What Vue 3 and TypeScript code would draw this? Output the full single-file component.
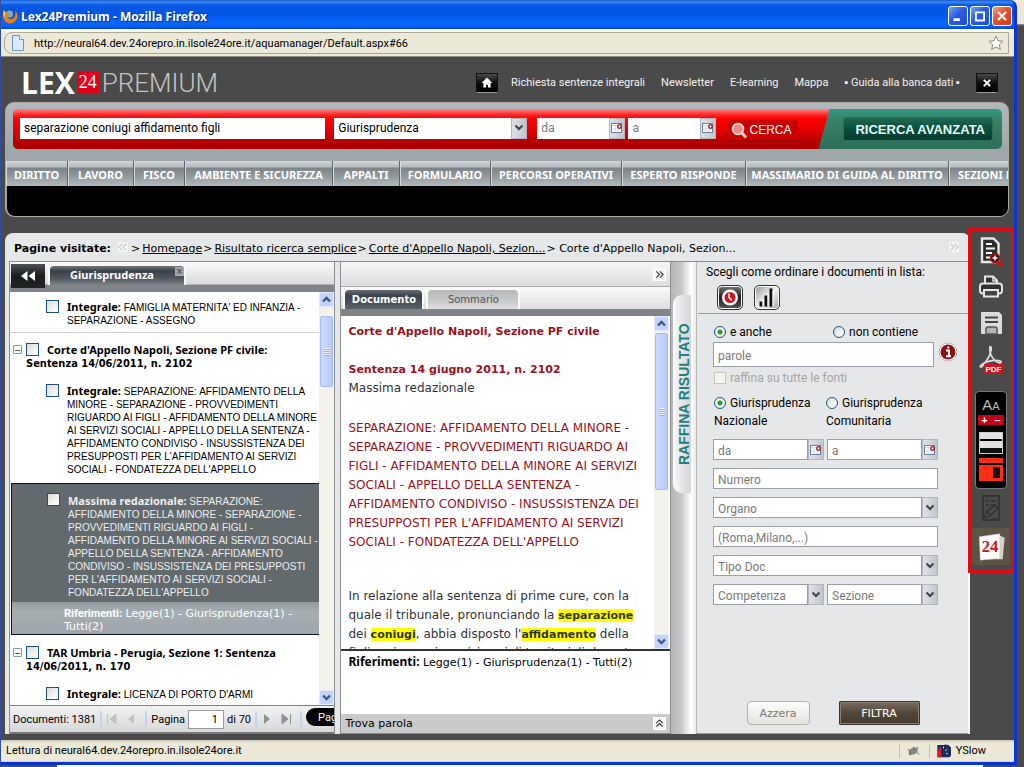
<script setup lang="ts">
import { ref } from 'vue'

interface Entry {
  kind: 'entry' | 'group' | 'selected'
  label: string
  text: string
  refs?: string
}

const query = ref('separazione coniugi affidamento figli')
const page = ref('1')
const mode = ref('anche')
const scope = ref('naz')

const topLinks: string[] = ['Richiesta sentenze integrali', 'Newsletter', 'E-learning', 'Mappa', '▪ Guida alla banca dati ▪']
const areas: string[] = [
  'DIRITTO', 'LAVORO', 'FISCO', 'AMBIENTE E SICUREZZA', 'APPALTI', 'FORMULARIO',
  'PERCORSI OPERATIVI', 'ESPERTO RISPONDE', 'MASSIMARIO DI GUIDA AL DIRITTO', 'SEZIONI LAVORO',
]
const crumbs: string[] = ['Homepage', 'Risultato ricerca semplice', "Corte d'Appello Napoli, Sezion..."]

const entries: Entry[] = [
  { kind: 'entry', label: 'Integrale:', text: "FAMIGLIA MATERNITA' ED INFANZIA -\nSEPARAZIONE - ASSEGNO" },
  { kind: 'group', label: "Corte d'Appello Napoli, Sezione PF civile:", text: 'Sentenza 14/06/2011, n. 2102' },
  {
    kind: 'entry',
    label: 'Integrale:',
    text: "SEPARAZIONE: AFFIDAMENTO DELLA\nMINORE - SEPARAZIONE - PROVVEDIMENTI\nRIGUARDO AI FIGLI - AFFIDAMENTO DELLA MINORE\nAI SERVIZI SOCIALI - APPELLO DELLA SENTENZA -\nAFFIDAMENTO CONDIVISO - INSUSSISTENZA DEI\nPRESUPPOSTI PER L'AFFIDAMENTO AI SERVIZI\nSOCIALI - FONDATEZZA DELL'APPELLO",
  },
  {
    kind: 'selected',
    label: 'Massima redazionale:',
    text: "SEPARAZIONE:\nAFFIDAMENTO DELLA MINORE - SEPARAZIONE -\nPROVVEDIMENTI RIGUARDO AI FIGLI -\nAFFIDAMENTO DELLA MINORE AI SERVIZI SOCIALI -\nAPPELLO DELLA SENTENZA - AFFIDAMENTO\nCONDIVISO - INSUSSISTENZA DEI PRESUPPOSTI\nPER L'AFFIDAMENTO AI SERVIZI SOCIALI -\nFONDATEZZA DELL'APPELLO",
    refs: 'Legge(1) - Giurisprudenza(1) -\nTutti(2)',
  },
  { kind: 'group', label: 'TAR Umbria - Perugia, Sezione 1: Sentenza', text: '14/06/2011, n. 170' },
  { kind: 'entry', label: 'Integrale:', text: "LICENZA DI PORTO D'ARMI" },
]
</script>

<template>
  <div class="desktop">
    <svg class="defs" aria-hidden="true">
      <symbol id="chev" viewBox="0 0 10 8"><path d="M1.5 1.5 5 5l3.500-3.500" fill="none" stroke="#3f4347" stroke-width="2" /></symbol>
      <symbol id="cal" viewBox="0 0 14 14">
        <rect x="1.500" y="2.500" width="10" height="9" fill="#fff" stroke="#6b7f9e" />
        <path d="M2 4.500h9M5 5v6M8 5v6M2 8h9" stroke="#d3dbe8" />
        <circle cx="9.500" cy="5.500" r="1.800" fill="#fff" stroke="#8c1420" stroke-width="1.300" />
      </symbol>
      <symbol id="up" viewBox="0 0 15 15"><path d="M4 9.500 7.500 6 11 9.500" fill="none" stroke="#3c5688" stroke-width="2.400" /></symbol>
      <symbol id="down" viewBox="0 0 15 15"><path d="M4 5.500 7.500 9 11 5.500" fill="none" stroke="#3c5688" stroke-width="2.400" /></symbol>
      <symbol id="more" viewBox="0 0 10 10"><path d="M1.500 1.500 5 5 1.500 8.500M5.500 1.500 9 5 5.500 8.500" fill="none" stroke="currentColor" stroke-width="1.200" /></symbol>
    </svg>

    <div class="window">
      <header class="titlebar">
        <svg class="fox" viewBox="0 0 16 16">
          <circle cx="8" cy="8" r="7" fill="#274f9c" />
          <circle cx="7.500" cy="6" r="3.500" fill="#6fb1e6" />
          <path d="M2 2C0 6 .5 12 4.500 14.500 9 17 15 14 15.500 8.500 15.600 6 14.500 3.500 13 2.500c.8 2 .6 3.500.2 4.500-.5 3-3 4.500-5.200 4C6 10.600 5 9.500 5.200 8c.8.300 2 .200 2.600-.8C6.500 7 6.200 6 6.400 5 5 4.800 3.500 4.500 3 3.800z" fill="#ee7d18" />
          <path d="M2 2C.8 5 1 8 2.500 10 2.600 7.500 3 6 4.500 5 3.500 4.600 3 4 3 3.500z" fill="#ffc13a" />
        </svg>
        <h1>Lex24Premium - Mozilla Firefox</h1>
        <div class="winbtns">
          <button aria-label="Riduci"><svg viewBox="0 0 20 20"><path d="M5 14h7" stroke="#fff" stroke-width="3" /></svg></button>
          <button aria-label="Ingrandisci"><svg viewBox="0 0 20 20"><path d="M5 6h10M5.500 5v10h9V5" fill="none" stroke="#fff" stroke-width="2" /></svg></button>
          <button class="quit" aria-label="Chiudi finestra"><svg viewBox="0 0 20 20"><path d="m5.500 5.500 9 9m0-9-9 9" stroke="#fff" stroke-width="2.400" /></svg></button>
        </div>
      </header>

      <div class="addressbar">
        <div class="address">
          <svg class="pageicon" viewBox="0 0 14 16"><path d="M1.500.500h7l4 4v11h-11z" fill="#dcebfb" stroke="#6f93c9" /><path d="M8.500.500v4h4" fill="#fff" stroke="#6f93c9" /></svg>
          <span class="url">http://neural64.dev.24orepro.in.ilsole24ore.it/aquamanager/Default.aspx#66</span>
          <svg class="star" viewBox="0 0 16 16"><path d="m8 1.200 2 4.500 4.900.500-3.600 3.300 1 4.900L8 11.900l-4.300 2.500 1-4.900L1.100 6.200 6 5.700z" fill="#fff" stroke="#8a8a86" /></svg>
        </div>
      </div>

      <main class="site">
        <div class="brandrow">
          <div class="logo"><b>LEX</b><span class="n24">24</span><span class="prem">PREMIUM</span></div>
          <nav class="toplinks">
            <a href="#" class="sq" aria-label="Home"><svg viewBox="0 0 22 20"><path d="M11 4 5 10h2v5h3v-3h2v3h3v-5h2z" fill="#fff" /></svg></a>
            <a v-for="l in topLinks" :key="l" href="#">{{ l }}</a>
            <a href="#" class="sq last" aria-label="Chiudi"><svg viewBox="0 0 22 20"><path d="m7.500 6.500 7 7m0-7-7 7" stroke="#fff" stroke-width="2.200" /></svg></a>
          </nav>
        </div>

        <section class="console">
          <form class="searchbar" @submit.prevent>
            <div class="redpart">
              <input v-model="query" class="q" aria-label="Testo da cercare" />
              <div class="combo src">
                <select aria-label="Fonte"><option>Giurisprudenza</option></select>
                <span class="drop"><svg><use href="#chev" /></svg></span>
              </div>
              <div class="combo when"><input placeholder="da" aria-label="Dal" /><button type="button" class="drop" aria-label="Calendario dal"><svg class="cal"><use href="#cal" /></svg></button></div>
              <div class="combo when second"><input placeholder="a" aria-label="Al" /><button type="button" class="drop" aria-label="Calendario al"><svg class="cal"><use href="#cal" /></svg></button></div>
              <button class="cerca">
                <svg viewBox="0 0 17 17"><path d="m10.500 10.500 4.500 5" stroke="#f3d0cc" stroke-width="3" /><circle cx="7" cy="7" r="5.500" fill="#ef8a86" stroke="#f8dcd8" stroke-width="1.600" /></svg>
                CERCA
              </button>
            </div>
            <button type="button" class="advanced">RICERCA AVANZATA</button>
          </form>
          <nav class="areas"><a v-for="a in areas" :key="a" href="#">{{ a }}</a></nav>
          <div class="blackband"></div>
        </section>

        <div class="work">
          <section class="panel">
            <div class="crumbs">
              <strong>Pagine visitate:</strong>
              <span class="ghost"><svg class="flip"><use href="#more" /></svg></span>
              <template v-for="c in crumbs" :key="c">&gt; <a href="#">{{ c }}</a></template>
              <span>&gt; Corte d'Appello Napoli, Sezion...</span>
              <span class="ghost end"><svg><use href="#more" /></svg></span>
            </div>

            <div class="columns">
              <section class="results">
                <div class="rhead">
                  <button class="back" aria-label="Indietro"><svg viewBox="0 0 16 12"><path d="M7.500 1v10L1 6zM15 1v10L8.500 6z" fill="#fff" /></svg></button>
                  <div class="rtab">Giurisprudenza<button aria-label="Chiudi scheda">×</button></div>
                </div>
                <div class="listwrap">
                  <div class="list">
                    <article v-for="(e, i) in entries" :key="i" :class="e.kind">
                      <button v-if="e.kind === 'group'" class="tree" aria-label="Comprimi">–</button>
                      <label>
                        <input type="checkbox" />
                        <span class="body"><b>{{ e.label }}</b>{{ e.kind === 'group' ? '\n' : ' ' }}<span>{{ e.text }}</span></span>
                      </label>
                      <p v-if="e.refs" class="refs"><b>Riferimenti:</b> {{ e.refs }}</p>
                    </article>
                  </div>
                  <div class="scroll short" aria-hidden="true">
                    <svg class="arr"><use href="#up" /></svg>
                    <span class="thumb"></span>
                    <svg class="arr"><use href="#down" /></svg>
                  </div>
                </div>
                <div class="pager">
                  <span class="count">Documenti: 1381</span>
                  <i></i>
                  <button disabled aria-label="Prima"><svg viewBox="0 0 12 12"><path d="M1.500 1v10M10 1v10L4 6z" stroke="currentColor" fill="currentColor" /></svg></button>
                  <button disabled aria-label="Precedente"><svg viewBox="0 0 12 12"><path d="M9 1v10L3 6z" fill="currentColor" /></svg></button>
                  <i></i>
                  <label>Pagina <input v-model="page" /></label>
                  <span>di 70</span>
                  <i></i>
                  <button aria-label="Successiva"><svg viewBox="0 0 12 12"><path d="M3 1v10l6-5z" fill="currentColor" /></svg></button>
                  <button aria-label="Ultima"><svg viewBox="0 0 12 12"><path d="M10.500 1v10M2 1v10l6-5z" stroke="currentColor" fill="currentColor" /></svg></button>
                  <i></i>
                  <button class="pill">Pagina</button>
                </div>
              </section>

              <section class="doc">
                <div class="dhead"><button class="mini" aria-label="Espandi"><svg><use href="#more" /></svg></button></div>
                <div class="dtabs"><button class="on">Documento</button><button>Sommario</button></div>
                <div class="docwrap">
                  <article class="text">
                    <h2>Corte d'Appello Napoli, Sezione PF civile</h2>
                    <h2>Sentenza 14 giugno 2011, n. 2102</h2>
                    <p>Massima redazionale</p>
                    <p class="abstract">SEPARAZIONE: AFFIDAMENTO DELLA MINORE -<br />SEPARAZIONE - PROVVEDIMENTI RIGUARDO AI<br />FIGLI - AFFIDAMENTO DELLA MINORE AI SERVIZI<br />SOCIALI - APPELLO DELLA SENTENZA -<br />AFFIDAMENTO CONDIVISO - INSUSSISTENZA DEI<br />PRESUPPOSTI PER L'AFFIDAMENTO AI SERVIZI<br />SOCIALI - FONDATEZZA DELL'APPELLO</p>
                    <p class="para">In relazione alla sentenza di prime cure, con la<br />quale il tribunale, pronunciando la <mark>separazione</mark><br />dei <mark>coniugi</mark>, abbia disposto l'<mark>affidamento</mark> della<br />figlia minore ai servizi sociali territoriali durante</p>
                  </article>
                  <div class="scroll long" aria-hidden="true">
                    <svg class="arr"><use href="#up" /></svg>
                    <span class="thumb"></span>
                    <svg class="arr"><use href="#down" /></svg>
                  </div>
                </div>
                <p class="drefs"><b>Riferimenti:</b> Legge(1) - Giurisprudenza(1) - Tutti(2)</p>
                <div class="find">Trova parola<button class="mini" aria-label="Apri ricerca"><svg class="turn"><use href="#more" /></svg></button></div>
              </section>

              <div class="sash"><button>RAFFINA RISULTATO</button></div>

              <form class="filter" @submit.prevent>
                <div class="sort">
                  <p>Scegli come ordinare i documenti in lista:</p>
                  <button type="button" class="clock" aria-label="Per data"><svg viewBox="0 0 24 22"><circle cx="12" cy="11" r="8" fill="#fff" /><circle cx="12" cy="11" r="5.500" fill="#cf1420" /><path d="M11 7v4l3 3" fill="none" stroke="#fff" stroke-width="1.500" /></svg></button>
                  <button type="button" aria-label="Per rilevanza"><svg viewBox="0 0 24 22"><path d="M6 20v-5M11 20V9M16 20V2" stroke="#111" stroke-width="3" /><path d="M8 20v-5M13 20V9M18 20V4" stroke="#fff" /></svg></button>
                </div>
                <div class="pair modes">
                  <label><input v-model="mode" type="radio" name="mode" value="anche" />e anche</label>
                  <label><input v-model="mode" type="radio" name="mode" value="non" />non contiene</label>
                </div>
                <div class="words">
                  <input placeholder="parole" aria-label="Parole" />
                  <svg viewBox="0 0 20 20"><circle cx="10" cy="10" r="9" fill="#fff" stroke="#b9b4b4" /><circle cx="10" cy="10" r="7.500" fill="#8d0f16" /><path d="M8 8.500h3V14M8 14.300h5M9.300 5.500h2" fill="none" stroke="#fff" stroke-width="2" /></svg>
                </div>
                <label class="all"><input type="checkbox" disabled />raffina su tutte le fonti</label>
                <div class="pair scopes">
                  <label><input v-model="scope" type="radio" name="scope" value="naz" />Giurisprudenza<br />Nazionale</label>
                  <label><input v-model="scope" type="radio" name="scope" value="com" />Giurisprudenza<br />Comunitaria</label>
                </div>
                <div class="fields">
                  <div class="duo">
                    <div class="combo"><input placeholder="da" aria-label="Data dal" /><button type="button" class="drop" aria-label="Calendario"><svg class="cal"><use href="#cal" /></svg></button></div>
                    <div class="combo"><input placeholder="a" aria-label="Data al" /><button type="button" class="drop" aria-label="Calendario"><svg class="cal"><use href="#cal" /></svg></button></div>
                  </div>
                  <input placeholder="Numero" aria-label="Numero" />
                  <div class="combo"><select aria-label="Organo"><option>Organo</option></select><span class="drop"><svg><use href="#chev" /></svg></span></div>
                  <input placeholder="(Roma,Milano,...)" aria-label="Sede" />
                  <div class="combo"><select aria-label="Tipo documento"><option>Tipo Doc</option></select><span class="drop"><svg><use href="#chev" /></svg></span></div>
                  <div class="duo">
                    <div class="combo"><select aria-label="Competenza"><option>Competenza</option></select><span class="drop"><svg><use href="#chev" /></svg></span></div>
                    <div class="combo"><select aria-label="Sezione"><option>Sezione</option></select><span class="drop"><svg><use href="#chev" /></svg></span></div>
                  </div>
                </div>
                <div class="actions"><button type="reset">Azzera</button><button class="go">FILTRA</button></div>
              </form>
            </div>
          </section>

          <aside class="tools">
            <button aria-label="Cerca nel documento"><svg viewBox="0 0 28 32"><path d="M5 2.500h11.500l5 5V26H5z" fill="#2c2c2c" stroke="#e8e8e8" stroke-width="2.400" /><path d="M9 8h6M9 12.500h9M9 17h6M9 21.500h5" stroke="#fff" stroke-width="2.200" /><path d="m19 24 6 6" stroke="#c4161c" stroke-width="3.500" /><circle cx="18" cy="22" r="4.500" fill="#3a1012" stroke="#b01218" stroke-width="1.500" /><path d="M15.500 22h5M18 19.500v5" stroke="#fff" stroke-width="1.500" /></svg></button>
            <button aria-label="Stampa"><svg viewBox="0 0 28 32"><path d="M8 12V4.500h8l4 4V12" fill="#333" stroke="#e6e6e6" stroke-width="2" /><path d="M16 4.500V9h4" fill="none" stroke="#e6e6e6" stroke-width="1.500" /><rect x="3" y="11.500" width="22" height="10" rx="3" fill="#333" stroke="#e6e6e6" stroke-width="2" /><path d="M7 18h14v6.500H7z" fill="#444" stroke="#e6e6e6" stroke-width="2" /></svg></button>
            <button aria-label="Salva"><svg viewBox="0 0 28 32"><path d="M5 4h17l3 3v18q0 1-1 1H5q-1 0-1-1V5q0-1 1-1z" fill="#dcdcdc" /><path d="M8 9.500h13M8 14h13" stroke="#444" stroke-width="2" /><path d="M9 26v-5q0-2 2-2h7q2 0 2 2v5z" fill="#b5b5b5" stroke="#555" stroke-width="1.500" /></svg></button>
            <button aria-label="Esporta PDF"><svg viewBox="0 0 28 32"><path d="M13 2.500c3 0 1 10-8 20-3 2-2-2 3-4 6-2.500 13-3 16-1 1 2-3 2-6-1-4-4-6-9-5-14z" fill="none" stroke="#ddd" stroke-width="1.700" /><path d="M7 20h19v9H7z" fill="#c8141a" /><text x="16.500" y="28" text-anchor="middle">PDF</text></svg></button>
            <div class="fontbox">
              <span class="aa">A<small>A</small></span>
              <span class="pm"><button aria-label="Ingrandisci testo">+</button><button aria-label="Riduci testo">–</button></span>
              <span class="swatch light"></span>
              <span class="swatch red"></span>
            </div>
            <button class="pen" disabled aria-label="Note"><svg viewBox="0 0 28 32"><path d="M6 3h16v24H6z" fill="none" stroke="#2f2f2f" stroke-width="1.500" /><path d="M9 8h3M14 8h5M9 12h3M14 12h5M7 25l3-7 8-6 3 3-8 8zM10 18l3 4M15 26h5" fill="none" stroke="#2f2f2f" stroke-width="1.300" /></svg></button>
            <button class="cards" aria-label="24 Ore"><svg viewBox="0 0 38 38"><path d="m26 7 7 3-2 22H12z" fill="#d9d3c4" /><path d="m7 9 21-3v25l-20 2z" fill="#fff" stroke="#cfc8b8" stroke-width=".5" /><text x="18" y="25" text-anchor="middle">24</text></svg></button>
          </aside>
        </div>
      </main>

      <footer class="status">
        <span>Lettura di neural64.dev.24orepro.in.ilsole24ore.it</span>
        <span class="ext"><svg viewBox="0 0 18 14"><path d="M3 8q3-6 9-5l3-1-1 3q1 4-4 6l-5 1q-2-1-2-4z" fill="#8a8a84" /><path d="M2 5l4 2M9 2l1 4M13 9l3 2M4 12l2-3" stroke="#55554f" /></svg></span>
        <span class="ext"><svg viewBox="0 0 16 16"><path d="M1 1h7a8 8 0 0 1 7 14H1z" fill="#1d2a5c" /><path d="M4 4l1 2M8 3v2M12 6l-2 2M13 11h-2" stroke="#fff" /><path d="M1 7l4-3 1 11H1z" fill="#d3202a" /></svg>YSlow</span>
      </footer>
    </div>
  </div>
</template>

<style>
html, body { margin: 0; height: 100%; }
</style>

<style scoped>
* { box-sizing: border-box; }
.desktop {
  height: 100vh; min-height: 700px; padding: 0 7px 2px 0; overflow: hidden;
  background: linear-gradient(90deg, #4a4a4a 57px, #fff 57px, #fff 96%, #4a4a4a 96%) left bottom / 100% 2px no-repeat,
    linear-gradient(#ece9d8 24px, #999 24px, #4a4a4a 26px);
  font: 11px Roboto, "Liberation Sans", sans-serif; color: #000;
}
.defs { position: absolute; width: 0; height: 0; }
button, input, select { font: inherit; margin: 0; padding: 0; border: 0; border-radius: 0; color: inherit; background: none; min-width: 0; }
h1, h2, p { margin: 0; font-size: inherit; }
a { color: inherit; }
svg { display: block; flex: none; }

.window { height: 100%; display: flex; flex-direction: column; border: solid #0a34d4; border-width: 0 3px 3px 1px; border-left-color: #2f4f9c; border-radius: 0 7px 0 0; background: #4a4a4a; overflow: hidden; }
.titlebar { height: 29px; display: flex; align-items: center; padding: 3px 0 0 1px; background: linear-gradient(#1659c8, #3a8cf8 2px, #0758e4 5px, #0055e5 14px, #0a66fd 22px, #0562fa 26px, #0347c8); }
.fox { width: 16px; height: 16px; margin-right: 3px; }
.titlebar h1 { flex: 1; font: bold 12px "Noto Sans", sans-serif; color: #fff; text-shadow: 1px 1px 1px #0f2a80; }
.winbtns { display: flex; gap: 2px; padding-right: 2px; }
.winbtns button { width: 20px; height: 20px; border: 1px solid #fff; border-radius: 3px; background: linear-gradient(135deg, #7ba2f0, #2a5be0 45%, #1e50d8); }
.winbtns svg { width: 18px; height: 18px; }
.winbtns .quit { background: linear-gradient(135deg, #f0a08c, #e0512c 45%, #cc3c18); }

.addressbar { padding: 3px 5px 2px 3px; background: linear-gradient(#fff 2px, #ece9d8 4px); border-bottom: 1px solid #8f8d80; }
.address { height: 22px; display: flex; align-items: center; padding: 0 4px 0 6px; border: 1px solid #aba894; border-radius: 8px 0 0 8px; background: #ece9d8; }
.pageicon { width: 14px; height: 16px; margin-right: 9px; }
.url { flex: 1; }
.star { width: 16px; height: 16px; }

.site { flex: 1; min-height: 0; display: flex; flex-direction: column; padding: 0 0 6px 4px; }
.brandrow { height: 45px; display: flex; align-items: center; justify-content: space-between; padding: 6px 16px 0 16px; color: #fff; }
.logo { display: flex; align-items: center; }
.logo b { font: bold 30px/22px "Open Sans", sans-serif; }
.n24 { width: 22px; height: 22px; margin: 0 3px 0 2px; background: #e2001a; font: 18px/20px "Liberation Serif", serif; text-align: center; }
.prem { font: 300 26px/24px Roboto, sans-serif; color: #c4c4c4; }
.toplinks { display: flex; align-items: center; gap: 16px; }
.toplinks a { color: #f2f2f2; text-decoration: none; white-space: nowrap; }
.toplinks .sq { width: 22px; height: 20px; border: 1px solid #111; border-bottom-color: #999; background: linear-gradient(#4a4a4a, #0c0c0c 50%, #000); margin-right: -3px; }
.toplinks .last { margin-right: 0; }
.sq svg { width: 20px; height: 18px; }

.console { margin-right: 5px; border-radius: 9px; background: linear-gradient(#b4b7bc, #a0a7aa 40%, #9da4a8); border: 1px solid #a9a9a2; overflow: hidden; }
.searchbar { display: flex; margin: 6px 6px 12px 7px; height: 40px; border-radius: 5px; overflow: hidden; background: linear-gradient(#2f9a80, #3a8068 30%, #2c6e58); }
.redpart { flex: 1; display: flex; align-items: center; padding: 0 32px 2px 7px; font-size: 12px; background: linear-gradient(#f88 0, #f22 6px, #f00 10px, #e80000 20px, #b80000 32px, #a80000); clip-path: polygon(0 0, 100% 0, calc(100% - 11px) 100%, 0 100%); }
.redpart input, .redpart select { height: 21px; padding: 0 4px; background: #fff; }
.redpart .q { flex: 305 1 305px; margin-right: 9px; }
.combo { display: flex; min-width: 0; }
.combo > input, .combo > select { flex: 1; width: 0; appearance: none; border-radius: 0; }
.drop { flex: none; width: 16px; display: flex; align-items: center; justify-content: center; background: linear-gradient(90deg, #dfe1e8, #c3c5cd); border: 1px solid #b4b6be; }
.drop svg { width: 10px; height: 8px; }
.drop svg.cal { width: 14px; height: 14px; }
.src { flex: 193 1 193px; margin-right: 10px; }
.when { flex: 88 1 88px; }
.second { margin-left: 3px; }
input::placeholder { color: #7a7a7a; opacity: 1; }
.cerca { display: flex; align-items: center; gap: 1px; height: 20px; margin: 4px 0 0 12px; padding: 0 6px 0 3px; border-radius: 3px; background: #c80000; color: #fff; font: 12px "Liberation Sans", sans-serif; box-shadow: 0 1px 1px #900; }
.cerca svg { width: 17px; height: 17px; }
.advanced { align-self: center; height: 22px; margin: 0 10px 0 15px; padding: 0 7px 0 11px; border-radius: 2px; color: #e6fff4; font: bold 13px "Liberation Sans", sans-serif; background: linear-gradient(#1f6a52, #0b5040 45%, #063c2e); box-shadow: 0 0 0 1px #2a7058; white-space: nowrap; }
.areas { display: grid; grid-template-columns: 62fr 66fr 51fr 148fr 67fr 91fr 131fr 124fr 203fr 59fr; height: 25px; background: linear-gradient(#d3d7d9, #b4babd 6px, #7d8487 7px, #8e9598 14px, #b3babd); }
.areas a { overflow: hidden; white-space: nowrap; text-align: center; color: #fff; text-decoration: none; font: bold 11px/28px "Noto Sans", sans-serif; border-right: 1px solid #5d6467; box-shadow: inset 1px 0 #d5dadc; }
.areas a:last-child { text-align: left; padding-left: 9px; border: 0; }
.blackband { height: 30px; margin: 0 0 0 1px; background: #000; border-radius: 0 0 7px 8px; }

.work { flex: 1; min-height: 0; display: flex; margin-top: 11px; }
.panel { flex: 1; min-width: 0; margin-top: 5px; display: flex; flex-direction: column; padding-left: 4px; border-right: 2px solid #fafafa; border-radius: 8px 8px 0 0; background: #e6e7e8; }
.crumbs { height: 28px; display: flex; align-items: center; gap: 2px; padding: 2px 8px 0 5px; font: 11px "DejaVu Sans", sans-serif; white-space: nowrap; }
.crumbs a { margin-right: -1px; }
.ghost { width: 10px; height: 10px; margin: 0 1px 3px 5px; background: #f6f6f6; color: #ccc; }
.ghost svg { width: 10px; height: 10px; }
.ghost.end { margin-left: auto; }
.flip { transform: scaleX(-1); }

.columns { flex: 1; min-height: 0; display: grid; grid-template: minmax(0, 1fr) / 324fr 333fr 25px 272px; border-top: 1px solid #8c8c8c; }
.results { display: flex; flex-direction: column; min-width: 0; border: solid #8c9094; border-width: 0 1px; background: #fff; overflow: hidden; }
.rhead { height: 30px; display: flex; align-items: flex-start; background: linear-gradient(#fbfbfb, #dadbdd 22px, #808488 23px); border-bottom: 1px solid #808488; }
.back { width: 34px; height: 24px; margin: 2px 3px 0 1px; display: grid; place-items: center; background: linear-gradient(#4c4f54, #1b1c1f 50%, #222); }
.back svg { width: 16px; height: 12px; }
.rtab { flex: none; position: relative; width: 138px; height: 21px; margin-top: 2px; border: 2px solid #f8f8f8; border-bottom: 0; border-radius: 6px 5px 0 0; background: linear-gradient(#73777b, #3b4148 5px, #4e555c 12px, #7d8286); color: #fff; text-align: center; font: bold 11px/17px "Noto Sans", sans-serif; padding-right: 10px; }
.rtab button { position: absolute; right: 0; top: 1px; width: 9px; height: 9px; background: #a5a8ab; color: #555; font: bold 10px/9px "Liberation Sans", sans-serif; }
.listwrap { flex: 1; min-height: 0; display: flex; }
.list { flex: 1; min-width: 0; overflow: hidden; }
.list article { position: relative; white-space: pre; }
.list label { display: flex; }
.list input { flex: none; appearance: none; width: 13px; height: 13px; border: 1px solid #1c5180; background: linear-gradient(135deg, #dcdcd7, #fff); }
.body { font: 10px/13px "Liberation Sans", sans-serif; }
.body b { font: bold 11px/13px "Noto Sans", sans-serif; }
.entry { padding: 8px 0 5px 36px; }
.entry .body { margin-left: 8px; }
.entry + .group { border-top: 1px solid #d0d0d0; }
.group { padding: 10px 0 6px 16px; }
.group label { display: block; }
.group input { float: left; margin: 0 8px 0 0; }
.group .body { font: bold 11px/13px "DejaVu Sans Condensed", "Noto Sans", sans-serif; }
.tree { position: absolute; left: 3px; top: 12px; width: 9px; height: 9px; border: 1px solid #7b9ebd; border-radius: 1px; background: #fff; font: 9px/6px "Liberation Sans", sans-serif; }
.selected { margin: 2px 0 1px 1px; border: 1px solid #101418; border-right: 0; background: #636a6e; color: #eee; }
.selected label { padding: 9px 0 3px 35px; }
.selected .body { margin: 1px 0 0 8px; }
.refs { padding: 5px 0 0 52px; height: 32px; overflow: hidden; font: 11px/13px "DejaVu Sans", sans-serif; color: #fff; background: linear-gradient(#949b9f, #a6aeb2 10px, #9da5a9); }
.refs b { font: bold 11px/13px Roboto, sans-serif; }

.scroll { flex: none; width: 15px; display: flex; flex-direction: column; background: #f3f3ec; }
.arr { width: 15px; height: 15px; border-radius: 2px; background: #c5d3fb; box-shadow: inset 0 0 0 1px #e3ebff; margin-bottom: auto; }
.arr:last-child { margin: auto 0 0; }
.thumb { width: 13px; margin: 2px 1px 0; border: 1px solid #a6bbf3; border-radius: 2px; background: repeating-linear-gradient(#eef4fe 0 1px, #8cb0f8 1px 2px) center / 6px 8px no-repeat, linear-gradient(90deg, #cbd9fd, #b9cbfa); }
.arr:first-child { margin-bottom: 7px; }
.short .thumb { height: 71px; }
.long .arr:first-child { margin-bottom: 0; }
.long .thumb { height: 157px; }

.pager { flex: none; height: 29px; display: flex; align-items: center; gap: 3px; padding-left: 3px; border-top: 1px solid #7d8084; border-bottom: 2px solid #777; background: linear-gradient(#f3f3f4, #d6d7d9); white-space: nowrap; overflow: hidden; }
.pager i { flex: none; width: 2px; height: 16px; margin: 0 1px; background: #c6d3e6; }
.pager svg { width: 12px; height: 12px; }
.pager button { flex: none; color: #8e9092; margin-right: 4px; }
.pager button:disabled { color: #bfc1c3; }
.pager label { display: flex; align-items: center; gap: 3px; }
.pager input { width: 36px; height: 19px; padding: 0 5px; text-align: right; border: 1px solid #9a9da0; background: #fff; }
.pager .pill { width: 60px; height: 18px; margin: 0 0 4px; padding-left: 12px; text-align: left; border-radius: 9px; background: #000; color: #fff; }

.doc { display: flex; flex-direction: column; min-width: 0; margin-left: 5px; border: solid #8c9094; border-width: 0 1px; background: #fff; }
.dhead { flex: none; height: 25px; display: flex; align-items: center; justify-content: flex-end; padding-right: 4px; background: linear-gradient(#f6f6f6, #dcdddf); border-bottom: 1px solid #a5a8ab; }
.mini { width: 13px; height: 13px; display: grid; place-items: center; border: 1px solid #fff; background: #f4f4f4; color: #333; }
.mini svg { width: 9px; height: 9px; }
.turn { transform: rotate(-90deg); }
.dtabs { flex: none; height: 29px; display: flex; gap: 2px; padding: 1px 2px 0; background: linear-gradient(#fafafa, #dcdddf 22px, #808488 22px); }
.dtabs button { width: 94px; height: 21px; border: 2px solid #fafafa; border-bottom: 0; border-radius: 6px 6px 0 0; background: linear-gradient(#b5b7b9, #cacccd 12px, #dedfe0); color: #555; font: 10px "DejaVu Sans", sans-serif; }
.dtabs .on { width: 81px; background: linear-gradient(#666c72, #39414a 6px, #5c636a); color: #fff; font-weight: bold; }
.docwrap { flex: 1; min-height: 0; display: flex; border-bottom: 2px solid #333; padding-right: 1px; }
.text { flex: 1; min-width: 0; padding: 6px 0 0 7px; overflow: hidden; white-space: nowrap; font: 12px/19px "DejaVu Sans", sans-serif; color: #333; }
.text h2 { font-size: 11px; line-height: 19px; color: #98121c; }
.text h2 + h2 { margin-top: 19px; }
.abstract { margin: 21px 0 35px; color: #98121c; }
mark { background: #ff0; color: inherit; font-size: 11px; font-weight: bold; }
.drefs { flex: none; height: 63px; padding: 4px 7px; font: 11px/13px "DejaVu Sans", sans-serif; white-space: nowrap; }
.drefs b { font: bold 12px/13px "Noto Sans", sans-serif; }
.find { flex: none; height: 20px; display: flex; align-items: center; justify-content: space-between; padding: 0 4px 0 4px; border-bottom: 1px solid #888; background: #c9cacb; font: 11px "DejaVu Sans", sans-serif; }

.sash { background: linear-gradient(90deg, #b4b6b8, #c4c6c8 40%, #fff 80%, #e8e9ea); }
.sash button { margin: 33px 0 0 2px; width: 18px; height: 198px; writing-mode: vertical-rl; transform: rotate(180deg); border-radius: 0 9px 9px 0; border-right: 2px solid #f8f8f8; background: linear-gradient(270deg, #f4f4f5, #d4d5d7); color: #1f7f80; font: bold 14px/18px "Liberation Sans", sans-serif; white-space: nowrap; }

.filter { display: flex; flex-direction: column; min-width: 0; border-left: 1px solid #b5b5b5; border-bottom: 1px solid #999; font-size: 12px; padding-left: 1px; }
.sort { height: 52px; padding: 2px 8px 0; border-bottom: 1px solid #999; }
.sort p { line-height: 16px; margin-bottom: 5px; }
.sort button { width: 26px; height: 25px; margin: 0 0 0 11px; border: 1px solid #333; border-radius: 5px; box-shadow: inset 0 0 0 1px #fff; background: linear-gradient(135deg, #8e9194, #f4f4f4 50%, #a0a3a6); }
.sort .clock { background: linear-gradient(#777, #222 50%, #555); }
.sort svg { width: 24px; height: 23px; }
.pair { display: flex; padding: 0 16px; line-height: 18px; }
.pair input { appearance: none; width: 12px; height: 12px; margin: 0 4px 0 0; border: 1px solid #1c5180; border-radius: 50%; background: linear-gradient(135deg, #dcdcd7, #fff); vertical-align: -2px; }
.pair input:checked { background: radial-gradient(#21a121 0 2px, #f6f6f3 3px); }
.modes { padding-top: 9px; }
.modes label { width: 121px; white-space: nowrap; }
.scopes label { width: 112px; }
.words { display: flex; align-items: flex-start; gap: 4px; padding: 1px 10px 0 15px; }
.words input { flex: 1; height: 25px; padding: 3px 4px 0; border: 1px solid #9a9fa5; background: #fff; }
.words svg { width: 20px; height: 20px; }
.all { display: flex; align-items: center; gap: 4px; height: 22px; padding-left: 16px; color: #a5a5a0; }
.all input { appearance: none; width: 12px; height: 12px; border: 1px solid #cac8bb; background: #f4f4f0; }
.scopes { padding-top: 5px; }
.fields { display: grid; gap: 8px; padding: 9px 30px 0 15px; color: #7a7a7a; }
.fields > * { height: 21px; }
.fields input, .fields select { height: 21px; padding: 2px 4px 0; border: 1px solid #9a9fa5; background: #fff; }
.duo { display: grid; grid-template-columns: 1fr 1fr; gap: 3px; }
.actions { display: flex; justify-content: center; align-items: center; gap: 29px; margin: auto 0 8px; font: 11px "DejaVu Sans", sans-serif; }
.actions button { width: 63px; height: 24px; border: 1px solid #b5b2a8; border-radius: 4px; background: linear-gradient(#fdfdfc, #e4e2dc); color: #777; }
.actions .go { width: 81px; border: 1px solid #3c342a; border-radius: 1px; background: linear-gradient(#776c5d, #52473a 50%, #453a2e); color: #fff; box-shadow: inset 0 0 0 1px #8a8073; }

.tools { flex: none; align-self: flex-start; position: relative; width: 46px; height: 345px; margin-left: -2px; display: flex; flex-direction: column; align-items: center; border: 3px solid #dd0d14; background: #4a4a4a; padding-top: 5px; }
.tools > button { margin-bottom: 4px; }
.tools svg { width: 28px; height: 32px; }
.tools text { fill: #fff; font: bold 8px "Liberation Sans", sans-serif; }
.fontbox { width: 32px; height: 98px; margin: 11px 0 4px; display: flex; flex-direction: column; align-items: stretch; padding: 3px 2px; border: 1px solid #777; border-radius: 4px; background: #000; }
.aa { height: 20px; text-align: center; color: #bbb; font: 15px/20px "Liberation Sans", sans-serif; }
.aa small { font-size: 11px; }
.pm { display: flex; justify-content: space-around; height: 10px; background: #c00018; color: #fff; font: bold 11px/10px "Liberation Sans", sans-serif; }
.swatch { height: 22px; margin: 7px 1px 0; }
.light { background: linear-gradient(#e3e3e3 6px, #000 6px, #000 8px, #e3e3e3 8px, #e3e3e3 15px, #111 15px); border: 1px solid #ccc; }
.red { margin-top: 4px; height: 23px; background: linear-gradient(#111, #111) right 3px bottom 3px / 7px 11px no-repeat, linear-gradient(#ff2d12 5px, #000 5px, #000 7px, #ff2d12 7px); }
.tools .cards { margin: 0; width: 38px; height: 37px; background: #5c5546; }
.cards svg { width: 38px; height: 37px; }
.tools .cards text { fill: #c4161c; font: bold 17px "Liberation Serif", serif; }
.tools .pen { margin-bottom: 3px; }

.status { flex: none; height: 22px; display: flex; align-items: center; gap: 8px; padding: 0 28px 0 5px; background: linear-gradient(#c8c5b8, #ece9d8 3px); border-bottom: 1px solid #d5d2c0; }
.status span:first-child { flex: 1; }
.ext { display: flex; align-items: center; gap: 5px; padding-left: 6px; border-left: 1px solid #c5c2b0; }
.ext svg { width: 15px; height: 14px; }
</style>
